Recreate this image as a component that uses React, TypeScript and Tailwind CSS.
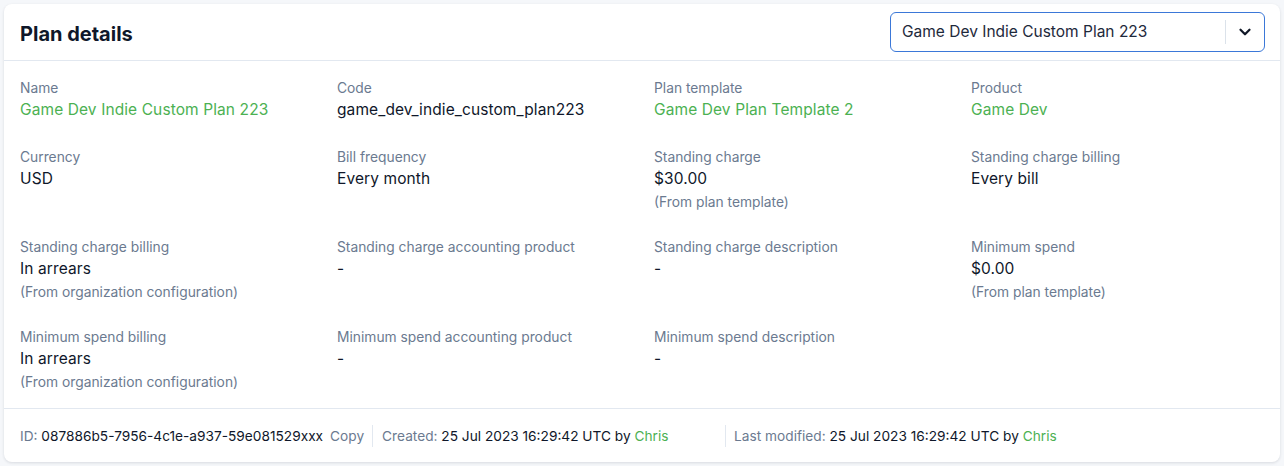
import React from "react";
import { ChevronDown } from "lucide-react";

type Field = {
  label: string;
  value: string;
  link?: boolean;
  note?: string;
};

const fields: (Field | null)[] = [
  { label: "Name", value: "Game Dev Indie Custom Plan 223", link: true },
  { label: "Code", value: "game_dev_indie_custom_plan223" },
  { label: "Plan template", value: "Game Dev Plan Template 2", link: true },
  { label: "Product", value: "Game Dev", link: true },
  { label: "Currency", value: "USD" },
  { label: "Bill frequency", value: "Every month" },
  { label: "Standing charge", value: "$30.00", note: "(From plan template)" },
  { label: "Standing charge billing", value: "Every bill" },
  {
    label: "Standing charge billing",
    value: "In arrears",
    note: "(From organization configuration)",
  },
  { label: "Standing charge accounting product", value: "-" },
  { label: "Standing charge description", value: "-" },
  { label: "Minimum spend", value: "$0.00", note: "(From plan template)" },
  {
    label: "Minimum spend billing",
    value: "In arrears",
    note: "(From organization configuration)",
  },
  { label: "Minimum spend accounting product", value: "-" },
  { label: "Minimum spend description", value: "-" },
  null,
];

const App: React.FC = () => {
  return (
    <div
      className="min-h-[466px] bg-[#f5f7fa] p-1"
      style={{ fontFamily: "Inter, 'Noto Sans', sans-serif" }}
    >
      <div className="rounded-lg bg-white shadow-[0_1px_3px_rgba(15,23,42,0.12)]">
        {/* Header */}
        <div className="flex h-[57px] items-center justify-between border-b border-[#e2e8f0] pl-4 pr-[15px]">
          <h1 className="pt-1 text-[20px] font-bold text-[#0f172a]">Plan details</h1>
          <div className="flex h-10 w-[375px] items-center rounded-md border border-[#3b78d8] pl-[11px]">
            <span className="flex-1 text-[15.5px] text-[#1e293b]">
              Game Dev Indie Custom Plan 223
            </span>
            <span className="h-6 w-px bg-[#dbe2ea]" />
            <span className="flex w-[38px] items-center justify-center text-[#111827]">
              <ChevronDown size={18} strokeWidth={3} />
            </span>
          </div>
        </div>

        {/* Fields */}
        <div className="grid grid-cols-4 gap-x-6 gap-y-[25px] px-4 pb-4 pt-[17px]">
          {fields.map((f, i) =>
            f ? (
              <div key={i} className="flex flex-col">
                <span className="text-[13.8px] leading-[20px] text-[#6b7a90]">
                  {f.label}
                </span>
                <span
                  className={
                    "text-[15.5px] leading-6 tracking-[0.1px] " +
                    (f.link ? "text-[#4cb152]" : "text-[#0f172a]")
                  }
                >
                  {f.value}
                </span>
                {f.note && (
                  <span className="mt-px text-[13.8px] leading-5 text-[#6b7a90]">
                    {f.note}
                  </span>
                )}
              </div>
            ) : (
              <div key={i} />
            )
          )}
        </div>

        {/* Footer */}
        <div className="flex h-[54px] items-center border-t border-[#e2e8f0] px-4 pt-px text-[13.7px]">
          <span className="text-[#6b7a90]">
            ID: <span className="text-[#0f172a]">087886b5-7956-4c1e-a937-59e081529xxx</span>
          </span>
          <span className="ml-[7px] text-[#6b7a90]">Copy</span>
          <span className="ml-2 mr-[9px] h-[22px] w-px bg-[#e2e8f0]" />
          <span className="w-[343px] text-[#6b7a90]">
            Created:{" "}
            <span className="text-[#0f172a]">25 Jul 2023 16:29:42 UTC by </span>
            <span className="text-[#4cb152]">Chris</span>
          </span>
          <span className="mr-2 h-[22px] w-px bg-[#e2e8f0]" />
          <span className="text-[#6b7a90]">
            Last modified:{" "}
            <span className="text-[#0f172a]">25 Jul 2023 16:29:42 UTC by </span>
            <span className="text-[#4cb152]">Chris</span>
          </span>
        </div>
      </div>
    </div>
  );
};

export default App;
